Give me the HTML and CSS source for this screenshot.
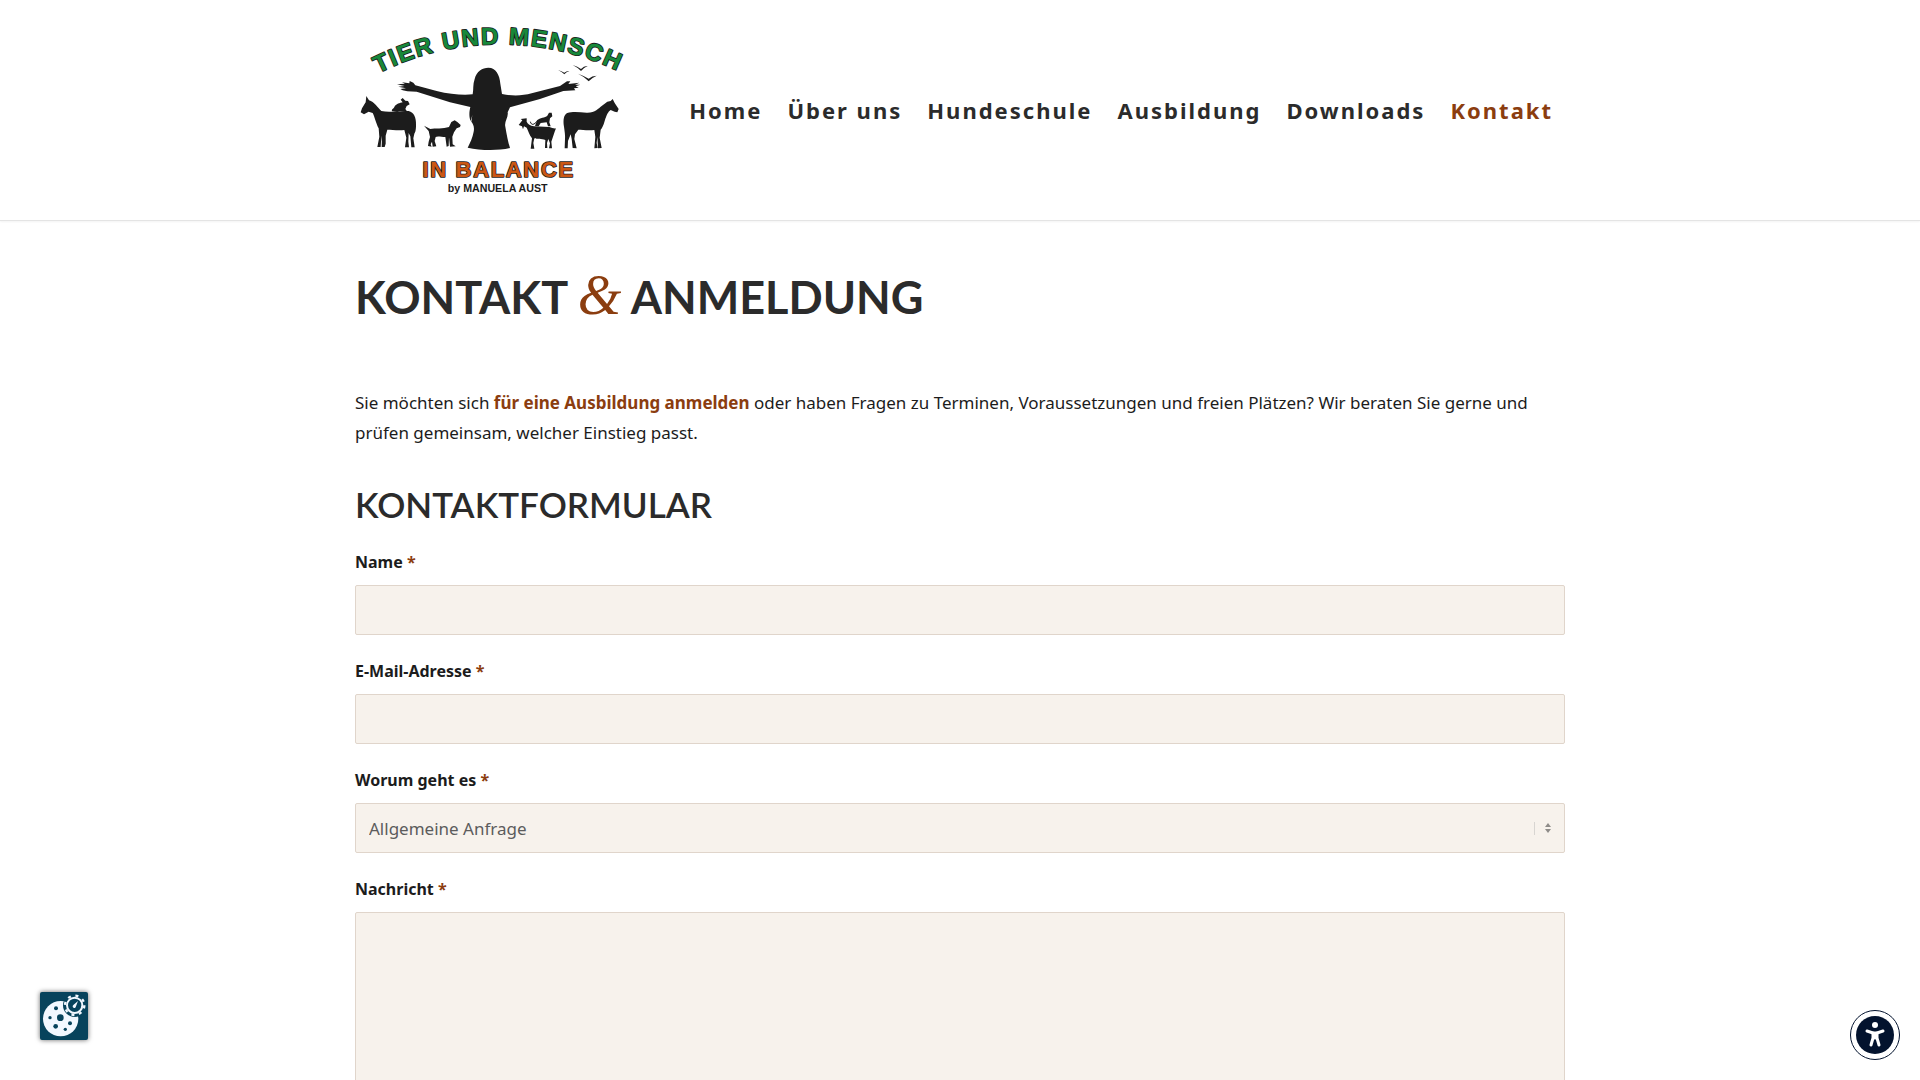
FILE: index.html
```html
<!DOCTYPE html>
<html lang="de">
<head>
    <meta charset="UTF-8">
    <meta name="viewport" content="width=device-width, initial-scale=1.0">
    <title>Kontakt – Tier und Mensch in Balance</title>
    <link rel="stylesheet" href="styles.css">
</head>
<body>
    <header class="site-header">
        <div class="container header-inner">
            <a href="#" class="logo" aria-label="Tier und Mensch in Balance">
                <svg viewBox="15 0 855 570" width="285" height="190">
                    <defs>
                        <path id="logoArc" d="M84 175 A 814 814 0 0 1 840 187"/>
                    </defs>
                    <text class="logo-top"><textPath href="#logoArc">TIER UND MENSCH</textPath></text>

                    <g class="silhouette">
                        <!-- woman -->
                        <path d="M415 158C438 158 449 180 451 206L456 237C490 244 518 242 545 235L630 213L651 199L661 199L655 207L688 203L675 209L691 209L677 214L686 218L672 220L676 226L640 228L570 252L480 277L473 292C476 308 462 320 466 335C470 358 474 380 480 399C440 408 390 406 353 398C360 383 368 368 371 350C374 335 369 326 364 320L367 300L362 318C356 305 358 288 361 276L300 262L200 230L172 229L158 226L151 222L168 220L145 215L164 213L141 208L165 206L156 202L178 205L179 198L190 203L196 211L260 228C300 238 340 241 368 238C371 222 368 208 374 192C380 168 397 158 415 158Z"/>
                        <!-- donkey and rabbit -->
                        <path d="M49 243L57 256C72 260 85 280 94 288C120 294 150 286 176 288C192 292 199 308 198 330C198 345 196 352 193 356L190 370L194 397L184 397L181 364L176 354L175 380L177 397L165 397L169 368L163 345C145 348 125 344 112 344L107 362L107 386L104 396L95 396L96 362L93 380L92 396L82 396L88 365L86 340C78 325 74 305 68 294L56 290L42 298L32 292L36 280L47 262Z"/>
                        <path d="M126 289C124 282 130 282 133 276C138 266 150 264 158 262L152 254L158 249L166 257L174 258L179 268L170 273L166 282L172 290L150 288L142 291Z"/>
                        <!-- dog -->
                        <path d="M222 332L241 342C255 339 280 342 297 336L304 321L314 316L322 321L332 330L330 336L320 340L312 352L307 365L308 388L317 394L300 395L297 367L296 393L290 395L286 366C275 366 262 362 257 366L254 378L259 394L248 395L246 380L242 388L245 395L234 393L236 380L240 366L236 348Z"/>
                        <!-- goat and cat -->
                        <path d="M512 312L530 310L530 320C534 328 540 332 552 334L598 336C606 338 612 342 618 340L614 350L608 368L604 380L606 400L597 400L600 385L595 372L591 384L592 399L585 399L586 375C575 370 560 374 553 370L550 384L553 401L542 401L546 370C538 360 534 346 530 338L522 334L519 343L516 334L506 330L517 316Z"/>
                        <path d="M555 333L561 316C570 308 585 308 592 302L597 293L605 293L607 304L600 310L598 322L602 334L594 334L590 322L572 324L566 334Z"/>
                        <path class="tail" d="M562 318C552 330 544 332 541 320"/>
                        <!-- horse -->
                        <path d="M788 252L794 264L806 282L802 292L794 290L782 285C774 290 770 300 764 318C760 332 756 340 752 344L749 368L755 399L744 400L742 366L740 384L743 399L733 400L736 366L733 345C715 348 695 344 685 344L675 358L673 372L680 400L668 399L665 372L662 358L654 378L653 400L644 400L645 372C646 360 644 350 642 335C639 315 641 299 652 294C670 288 690 292 710 293C735 294 745 280 756 272L772 260L782 258Z"/>
                        <!-- birds -->
                        <path d="M624 165Q635 168 643 173Q650 167 658 168Q649 171 643 178Q636 170 624 165Z"/>
                        <path d="M668 150Q683 155 693 162Q702 152 713 153Q701 158 693 168Q684 158 668 150Z"/>
                        <path d="M684 176Q703 183 716 191Q726 182 740 182Q726 188 716 199Q704 185 684 176Z"/>
                    </g>

                    <text class="logo-bottom" x="446" y="485" text-anchor="middle">IN BALANCE</text>
                    <text class="logo-by" x="443" y="532" text-anchor="middle">by MANUELA AUST</text>
                </svg>
            </a>
            <nav class="main-nav">
                <a href="#">Home</a>
                <a href="#">Über uns</a>
                <a href="#">Hundeschule</a>
                <a href="#">Ausbildung</a>
                <a href="#">Downloads</a>
                <a href="#" class="active">Kontakt</a>
            </nav>
        </div>
    </header>

    <main class="container">
        <h1>KONTAKT <span class="amp">&amp;</span> ANMELDUNG</h1>

        <p class="intro">Sie möchten sich <strong>für eine Ausbildung anmelden</strong> oder haben Fragen zu Terminen, Voraussetzungen und freien Plätzen? Wir beraten Sie gerne und prüfen gemeinsam, welcher Einstieg passt.</p>

        <h2>KONTAKTFORMULAR</h2>

        <form class="contact-form">
            <div class="field">
                <label for="name">Name <span class="required">*</span></label>
                <input type="text" id="name" required>
            </div>
            <div class="field">
                <label for="email">E-Mail-Adresse <span class="required">*</span></label>
                <input type="email" id="email" required>
            </div>
            <div class="field">
                <label for="topic">Worum geht es <span class="required">*</span></label>
                <div class="select-wrap">
                    <select id="topic">
                        <option>Allgemeine Anfrage</option>
                    </select>
                    <svg class="select-arrows" width="18" height="14" viewBox="0 0 18 14">
                        <path d="M0 1h1v13H0z" fill="#d8d5d1"/>
                        <path d="M11 6l3-4 3 4zM11 8l3 4 3-4z" fill="#8f8c89"/>
                    </svg>
                </div>
            </div>
            <div class="field">
                <label for="message">Nachricht <span class="required">*</span></label>
                <textarea id="message" rows="10" required></textarea>
            </div>
        </form>
    </main>

    <button type="button" class="cookie-btn" aria-label="Cookie-Einstellungen">
        <svg width="48" height="48" viewBox="0 0 144 144">
            <circle cx="62" cy="80" r="53" fill="#f2f8ff"/>
            <circle cx="104" cy="40" r="35" fill="#07435c"/>
            <g fill="#07435c">
                <circle cx="61" cy="77" r="10"/>
                <circle cx="48" cy="49" r="6"/>
                <circle cx="30" cy="77" r="5"/>
                <circle cx="47" cy="103" r="7"/>
                <circle cx="90" cy="94" r="6"/>
                <circle cx="76" cy="112" r="5"/>
            </g>
            <circle cx="104" cy="40" r="29" fill="none" stroke="#f2f8ff" stroke-width="7" stroke-dasharray="9 14"/>
            <circle cx="104" cy="40" r="23" fill="none" stroke="#f2f8ff" stroke-width="6"/>
            <path d="M114 27l-6 16a5 5 0 1 1-8-4z" fill="#f2f8ff"/>
        </svg>
    </button>

    <button type="button" class="a11y-btn" aria-label="Barrierefreiheit">
        <svg width="38" height="38" viewBox="0 0 38 38">
            <circle cx="19" cy="19" r="19" fill="#03132e"/>
            <circle cx="19" cy="9" r="3" fill="#fff"/>
            <path d="M11 15L17 17H21L27 15M19 17V22" fill="none" stroke="#fff" stroke-width="3" stroke-linecap="round" stroke-linejoin="round"/>
            <path d="M17 17V22L15 29M21 17V22L23 29" fill="none" stroke="#fff" stroke-width="3" stroke-linecap="round" stroke-linejoin="round"/>
        </svg>
    </button>
</body>
</html>
```
FILE: styles.css
```css
* {
    box-sizing: border-box;
}

body {
    margin: 0;
    background: #fff;
    color: #1c1c1c;
    font-family: "Noto Sans", sans-serif;
    font-size: 17px;
    line-height: 30px;
}

.container {
    max-width: 1310px;
    margin: 0 auto;
    padding: 0 50px;
}

/* Header */
.site-header {
    padding: 15px 0;
    border-bottom: 1px solid #e4e4e4;
    box-shadow: 0 1px 2px rgba(0, 0, 0, 0.05);
}

.header-inner {
    display: flex;
    align-items: center;
    justify-content: space-between;
}

.logo svg {
    display: block;
}

.logo text {
    font-family: "Liberation Sans", sans-serif;
    font-weight: 700;
}

.logo-top,
.logo-bottom {
    stroke: #1c1c1c;
    stroke-width: 5px;
    stroke-linejoin: round;
    paint-order: stroke;
}

.logo-top {
    font-size: 72px;
    letter-spacing: 5px;
    fill: #17883a;
}

.logo-bottom {
    font-size: 66px;
    letter-spacing: 5px;
    fill: #cb5714;
}

.logo-by {
    font-size: 32px;
    fill: #1c1c1c;
}

.silhouette {
    fill: #1c1c1c;
}

.silhouette .tail {
    fill: none;
    stroke: #1c1c1c;
    stroke-width: 3px;
}

.main-nav {
    display: flex;
    gap: 25px;
    padding-right: 12px;
}

.main-nav a {
    color: #2b2b2b;
    font-size: 22px;
    font-weight: 700;
    letter-spacing: 2px;
    text-decoration: none;
}

.main-nav a.active {
    color: #8b3d0f;
}

/* Content */
h1,
h2 {
    margin: 0;
    color: #2b2b2b;
    font-family: Lato, sans-serif;
}

h1 {
    margin-top: 46px;
    font-size: 45px;
    font-weight: 700;
    line-height: 60px;
}

.amp {
    color: #8b3d0f;
    font-family: "Liberation Serif", serif;
    font-size: 56px;
    font-style: italic;
    font-weight: 400;
    line-height: 1;
}

.intro {
    margin: 61px 0 35px;
}

.intro strong,
.required {
    color: #8b3d0f;
}

h2 {
    font-size: 35px;
    font-weight: 600;
    line-height: 42px;
}

/* Form */
.contact-form {
    display: flex;
    flex-direction: column;
    gap: 24px;
    margin: 25px 0 50px;
}

label {
    display: block;
    margin-bottom: 11px;
    font-size: 16px;
    font-weight: 700;
    line-height: 24px;
}

input,
select,
textarea {
    display: block;
    width: 100%;
    padding: 0 13px;
    border: 1px solid #e0d5cb;
    border-radius: 2px;
    background: #f7f2ec;
    color: #5c5c5c;
    font-family: inherit;
    font-size: 17px;
}

input,
select {
    height: 50px;
}

select {
    appearance: none;
}

textarea {
    padding: 13px;
    resize: vertical;
}

.select-wrap {
    position: relative;
}

.select-arrows {
    position: absolute;
    top: 18px;
    right: 13px;
    pointer-events: none;
}

/* Floating buttons */
.cookie-btn,
.a11y-btn {
    position: fixed;
    padding: 0;
    cursor: pointer;
}

.cookie-btn {
    bottom: 40px;
    left: 40px;
    width: 48px;
    height: 48px;
    border: 0;
    border-radius: 2px;
    background: #07435c;
    box-shadow: 0 0 5px rgba(0, 0, 0, 0.6);
}

.cookie-btn svg {
    display: block;
}

.a11y-btn {
    display: flex;
    align-items: center;
    justify-content: center;
    right: 20px;
    bottom: 20px;
    width: 50px;
    height: 50px;
    border: 1px solid #03132e;
    border-radius: 50%;
    background: #fff;
}
```
